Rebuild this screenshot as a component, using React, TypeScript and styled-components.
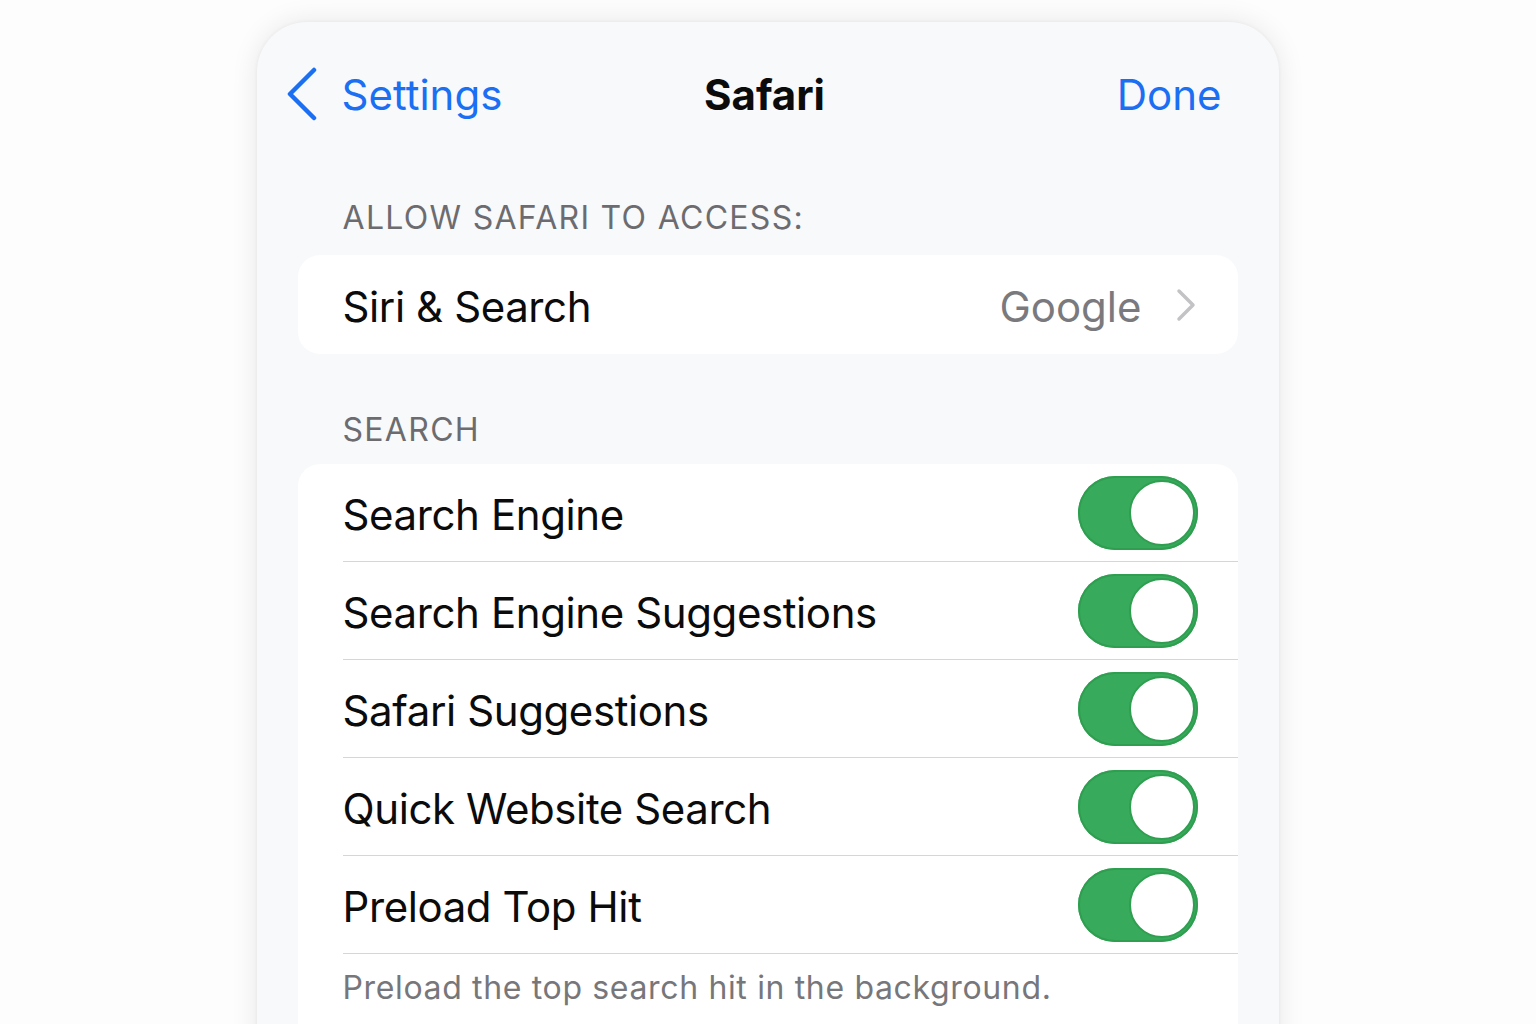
import React from "react";
import styled, { createGlobalStyle } from "styled-components";

const Global = createGlobalStyle`
  html, body { margin: 0; padding: 0; background: #ffffff; }
  body { font-family: Inter, "Noto Sans", "Liberation Sans", sans-serif; -webkit-font-smoothing: antialiased; }
  #root { height: 1024px; overflow: hidden; }
`;

const Page = styled.div`
  height: 1024px;
  display: flex;
  justify-content: center;
  padding-top: 22px;
  box-sizing: border-box;
  overflow: hidden;
  background: #fdfdfd;
`;

const Phone = styled.div`
  width: 1022px;
  margin-left: -1px;
  height: 1100px;
  background: #f8f9fb;
  border-radius: 50px;
  box-shadow: 0 0 28px rgba(0, 0, 0, 0.09), 0 0 4px rgba(0, 0, 0, 0.05);
  padding: 0 41px;
  box-sizing: border-box;
  display: flex;
  flex-direction: column;
`;

const NavBar = styled.div`
  height: 144px;
  display: grid;
  grid-template-columns: 1fr auto 1fr;
  align-items: center;
  margin: 0 -41px 2px;
  padding: 0 44px;
`;

const Back = styled.div`
  display: flex;
  align-items: center;
  gap: 22px;
  margin-left: -15px;
  color: #1a6ff3;
  font-size: 42px;
  letter-spacing: 0;
`;

const Title = styled.div`
  font-size: 42px;
  font-weight: 700;
  color: #0b0b0b;
  letter-spacing: 0;
  margin-right: 6px;
`;

const Done = styled.div`
  justify-self: end;
  margin-right: 13px;
  font-size: 42px;
  color: #1a6ff3;
  letter-spacing: 0;
`;

const SectionHeader = styled.div<{ $top: number; $bottom: number }>`
  padding: ${(p) => p.$top}px 45px ${(p) => p.$bottom}px;
  font-size: 32px;
  line-height: 40px;
  color: #6c6c70;
  letter-spacing: 1.3px;
`;

const Card = styled.div<{ $open?: boolean }>`
  background: #ffffff;
  border-radius: ${(p) => (p.$open ? "22px 22px 0 0" : "22px")};
  display: flex;
  flex-direction: column;
  ${(p) => (p.$open ? "flex: 1;" : "")}
`;

const Row = styled.div<{ $h: number; $line?: boolean }>`
  height: ${(p) => p.$h}px;
  flex-shrink: 0;
  margin-left: 45px;
  padding-right: 40px;
  display: flex;
  align-items: center;
  justify-content: space-between;
  border-bottom: ${(p) => (p.$line ? "1px solid #d6d6d8" : "none")};
`;

const Label = styled.div`
  font-size: 42px;
  color: #0b0b0b;
  letter-spacing: -0.4px;
  padding-top: 4px;
`;

const Trail = styled.div`
  display: flex;
  align-items: center;
  gap: 34px;
  margin-right: 2px;
`;

const Value = styled.div`
  font-size: 42px;
  color: #7a7a7e;
  letter-spacing: 0;
  padding-top: 4px;
`;

const Toggle = styled.div`
  width: 120px;
  height: 74px;
  border-radius: 37px;
  background: #37ab5b;
  box-shadow: inset 0 0 0 2px #2f9e50;
  display: flex;
  align-items: center;
  justify-content: flex-end;
  padding: 2px 3px;
  box-sizing: border-box;
`;

const Knob = styled.div`
  width: 66px;
  height: 66px;
  border-radius: 50%;
  background: #ffffff;
  border: 2px solid #2f9e50;
  box-sizing: border-box;
`;

const Footer = styled.div`
  padding: 12px 45px 0;
  font-size: 32px;
  line-height: 44px;
  color: #77777b;
  letter-spacing: 0.65px;
`;

const toggles = [
  "Search Engine",
  "Search Engine Suggestions",
  "Safari Suggestions",
  "Quick Website Search",
  "Preload Top Hit",
];

export default function App() {
  return (
    <>
      <Global />
      <Page>
        <Phone>
          <NavBar>
            <Back>
              <svg width="34" height="54" viewBox="0 0 34 54" fill="none">
                <path
                  d="M28 3 L4 27 L28 51"
                  stroke="#1a6ff3"
                  strokeWidth="4.5"
                  strokeLinecap="round"
                  strokeLinejoin="round"
                />
              </svg>
              <span>Settings</span>
            </Back>
            <Title>Safari</Title>
            <Done>Done</Done>
          </NavBar>
          <SectionHeader $top={30} $bottom={17}>
            ALLOW SAFARI TO ACCESS:
          </SectionHeader>
          <Card>
            <Row $h={99}>
              <Label>Siri &amp; Search</Label>
              <Trail>
                <Value>Google</Value>
                <svg width="20" height="34" viewBox="0 0 20 34" fill="none">
                  <path
                    d="M3 3 L17 17 L3 31"
                    stroke="#c3c3c6"
                    strokeWidth="3.5"
                    strokeLinecap="round"
                    strokeLinejoin="round"
                  />
                </svg>
              </Trail>
            </Row>
          </Card>
          <SectionHeader $top={56} $bottom={14}>
            SEARCH
          </SectionHeader>
          <Card $open>
            {toggles.map((t) => (
              <Row key={t} $h={97} $line>
                <Label>{t}</Label>
                <Toggle>
                  <Knob />
                </Toggle>
              </Row>
            ))}
            <Footer>Preload the top search hit in the background.</Footer>
          </Card>
        </Phone>
      </Page>
    </>
  );
}
